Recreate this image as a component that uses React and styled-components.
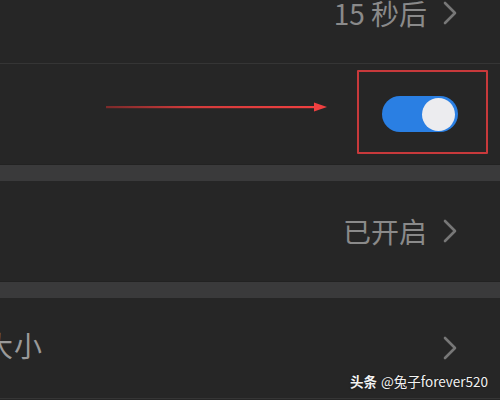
import React from 'react';
import styled, { createGlobalStyle } from 'styled-components';

const Global = createGlobalStyle`
  html, body {
    margin: 0;
    padding: 0;
    background: #262626;
    overflow: hidden;
  }
  body {
    font-family: "Noto Sans CJK SC", "Noto Sans", sans-serif;
  }
`;

const Screen = styled.div`
  position: relative;
  width: 500px;
  height: 400px;
  overflow: hidden;
  background: #262626;
`;

// the list is cropped: first row starts above the viewport
const List = styled.div`
  margin-top: -37px;
  display: flex;
  flex-direction: column;
`;

const Row = styled.div`
  position: relative;
  height: 100px;
  display: flex;
  align-items: center;
  justify-content: space-between;
  padding: 0 42px 0 0;
  background: #262626;
  border-bottom: ${p => (p.divider ? '1px solid #353535' : 'none')};
  box-sizing: content-box;
`;

const Band = styled.div`
  height: 16px;
  background: #3a3a3b;
  border-top: 1px solid #222;
`;

const Label = styled.span`
  margin-left: ${p => p.offset || 0}px;
  margin-top: -6px;
  font-size: 28px;
  color: #9a9a9a;
  letter-spacing: 1px;
`;

const Value = styled.div`
  display: flex;
  align-items: center;
  gap: 15px;
  font-size: 28px;
  color: #8a8a8a;
  margin-left: auto;
`;

const Chevron = () => (
  <svg width="16" height="24" viewBox="0 0 16 24">
    <path d="M3 2 L13 12 L3 22" fill="none" stroke="#777" strokeWidth="2.6" strokeLinecap="round" strokeLinejoin="round" />
  </svg>
);

const ToggleWrap = styled.div`
  position: relative;
  margin-left: auto;
  margin-right: 0;
`;

const Track = styled.div`
  width: 76px;
  height: 36px;
  border-radius: 18px;
  background: #2a7fe3;
  display: flex;
  align-items: center;
  justify-content: flex-end;
  padding: 0 3px;
  box-sizing: border-box;
  filter: blur(0.6px);
`;

const Knob = styled.div`
  width: 33px;
  height: 33px;
  border-radius: 50%;
  background: #ececef;
`;

const Highlight = styled.div`
  position: absolute;
  top: -26px;
  bottom: -22px;
  left: -25px;
  right: -30px;
  border: 2px solid #c8393b;
  border-radius: 1px;
`;

const Arrow = styled.svg`
  position: absolute;
  right: calc(100% + 54px);
  top: 6px;
  width: 222px;
  height: 10px;
`;

const Watermark = styled.div`
  position: absolute;
  right: 12px;
  bottom: 9px;
  font-size: 13.5px;
  color: #f2f2f2;
  font-family: "Noto Sans CJK SC", "Noto Sans", sans-serif;
  text-shadow: 0 0 2px rgba(0, 0, 0, 0.6);
  b {
    font-weight: 700;
    margin-right: 4px;
  }
`;

export default function App() {
  return (
    <Screen>
      <Global />
      <List>
        <Row divider>
          <Value>
            15 秒后
            <Chevron />
          </Value>
        </Row>
        <Row>
          <ToggleWrap>
            <Arrow viewBox="0 0 222 10">
              <defs>
                <linearGradient id="ar" x1="0" x2="1" y1="0" y2="0">
                  <stop offset="0" stopColor="#7a2a2a" />
                  <stop offset="0.4" stopColor="#d33b3b" />
                  <stop offset="1" stopColor="#f04040" />
                </linearGradient>
              </defs>
              <rect x="0" y="4" width="212" height="2.2" fill="url(#ar)" />
              <path d="M208 0.5 L221 5 L208 9.5 Z" fill="#f04040" />
            </Arrow>
            <Track>
              <Knob />
            </Track>
            <Highlight />
          </ToggleWrap>
        </Row>
        <Band />
        <Row>
          <Value>
            已开启
            <Chevron />
          </Value>
        </Row>
        <Band />
        <Row divider>
          <Label offset={-15}>大小</Label>
          <Value>
            <Chevron />
          </Value>
        </Row>
      </List>
      <Watermark>
        <b>头条</b>@兔子forever520
      </Watermark>
    </Screen>
  );
}
